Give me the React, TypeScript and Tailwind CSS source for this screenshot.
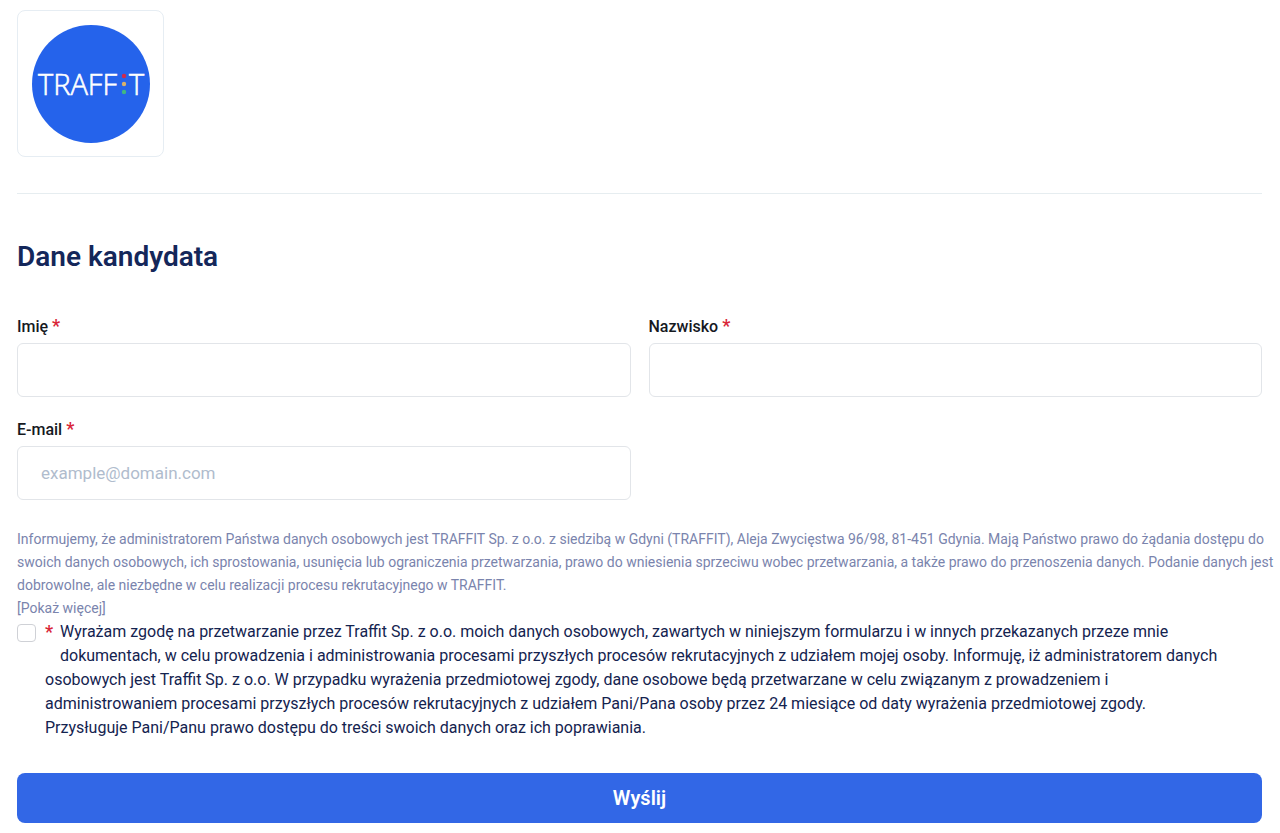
import React from 'react';

function Logo() {
  return (
    <div className="flex h-[147px] w-[147px] items-center justify-center rounded-lg border border-[#e6edf3]">
      <svg width="118" height="118" viewBox="0 0 118 118" role="img" aria-label="TRAFFIT">
        <circle cx="59" cy="59" r="59" fill="#2563eb" />
        <g
          fill="#fff"
          stroke="#fff"
          strokeWidth="0.6"
          fontFamily="'Open Sans', sans-serif"
          fontWeight="300"
          fontSize="29"
        >
          <text x="6" y="70">
            TRAFF
          </text>
          <text x="97" y="70">
            T
          </text>
        </g>
        <circle cx="92" cy="51" r="2.2" fill="#d02a4c" />
        <circle cx="92" cy="59" r="2.2" fill="#d9b26a" />
        <circle cx="92" cy="67" r="2.2" fill="#41b883" />
      </svg>
    </div>
  );
}

type FieldProps = {
  id: string;
  label: string;
  type?: string;
  placeholder?: string;
};

function Field({ id, label, type = 'text', placeholder }: FieldProps) {
  return (
    <div>
      <label htmlFor={id} className="block text-base leading-6 font-medium text-[#16191f]">
        {label} <span className="text-lg leading-none font-semibold text-[#d92638]">*</span>
      </label>
      <input
        id={id}
        name={id}
        type={type}
        placeholder={placeholder}
        required
        className="mt-1 block h-[54px] w-full rounded-md border border-[#e2e5e9] bg-white px-[23px] text-[17px] placeholder:text-[#b0bccd]"
      />
    </div>
  );
}

function Consent() {
  return (
    <div className="flex items-start gap-[9px] pr-[37px]">
      <input
        id="consent"
        type="checkbox"
        required
        className="mt-1 h-[18px] w-[19px] shrink-0 appearance-none rounded border border-[#cfd1d6] bg-white checked:bg-[#3267e6]"
      />
      <label htmlFor="consent" className="block text-base leading-6 text-[#14234f]">
        <span className="float-left h-12 w-[15px] text-lg leading-6 font-semibold text-[#d92638]">*</span>
        Wyrażam zgodę na przetwarzanie przez Traffit Sp. z o.o. moich danych osobowych, zawartych w niniejszym
        formularzu i w innych przekazanych przeze mnie dokumentach, w celu prowadzenia i administrowania procesami
        przyszłych procesów rekrutacyjnych z udziałem mojej osoby. Informuję, iż administratorem danych osobowych jest
        Traffit Sp. z o.o. W przypadku wyrażenia przedmiotowej zgody, dane osobowe będą przetwarzane w celu związanym z
        prowadzeniem i administrowaniem procesami przyszłych procesów rekrutacyjnych z udziałem Pani/Pana osoby przez 24
        miesiące od daty wyrażenia przedmiotowej zgody. Przysługuje Pani/Panu prawo dostępu do treści swoich danych oraz
        ich poprawiania.
      </label>
    </div>
  );
}

export default function App() {
  return (
    <main className="bg-white pt-[10px] pr-[18px] pb-[9px] pl-[17px] font-[Roboto,sans-serif]">
      <Logo />
      <hr className="mt-9 border-[#e6edf0]" />
      <form>
        <h1 className="mt-[45px] text-[28px] leading-9 font-semibold text-[#14275a]">Dane kandydata</h1>
        <div className="mt-10 grid grid-cols-2 gap-x-[18px] gap-y-[21px]">
          <Field id="firstName" label="Imię" />
          <Field id="lastName" label="Nazwisko" />
          <Field id="email" label="E-mail" type="email" placeholder="example@domain.com" />
        </div>
        <div className="mt-7 -mr-3 text-sm leading-[23px] text-[#7a84ad]">
          <p>
            Informujemy, że administratorem Państwa danych osobowych jest TRAFFIT Sp. z o.o. z siedzibą w Gdyni
            (TRAFFIT), Aleja Zwycięstwa 96/98, 81-451 Gdynia. Mają Państwo prawo do żądania dostępu do swoich danych
            osobowych, ich sprostowania, usunięcia lub ograniczenia przetwarzania, prawo do wniesienia sprzeciwu wobec
            przetwarzania, a także prawo do przenoszenia danych. Podanie danych jest dobrowolne, ale niezbędne w celu
            realizacji procesu rekrutacyjnego w TRAFFIT.
          </p>
          <a href="#more" className="block">
            [Pokaż więcej]
          </a>
        </div>
        <Consent />
        <button
          type="submit"
          className="mt-[33px] block h-[50px] w-full rounded-lg bg-[#3267e6] text-xl font-semibold text-white"
        >
          Wyślij
        </button>
      </form>
    </main>
  );
}
